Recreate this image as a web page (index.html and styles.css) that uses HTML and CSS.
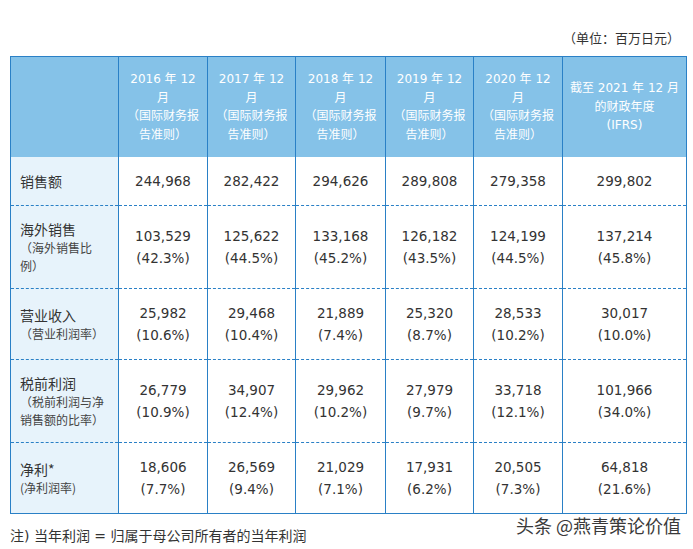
FILE: index.html
```html
<!DOCTYPE html>
<html lang="zh-CN">
<head>
<meta charset="utf-8">
<title>财务数据</title>
<link rel="stylesheet" href="styles.css">
</head>
<body>
<div class="page">
  <div class="unit">（单位：百万日元）</div>
  <table class="fin">
    <colgroup>
      <col class="c-label">
      <col class="c-89">
      <col class="c-88">
      <col class="c-90">
      <col class="c-88">
      <col class="c-89">
      <col class="c-last">
    </colgroup>
    <thead>
      <tr>
        <th class="corner"></th>
        <th>2016 年 12 月<br>（国际财务报告准则）</th>
        <th>2017 年 12 月<br>（国际财务报告准则）</th>
        <th>2018 年 12 月<br>（国际财务报告准则）</th>
        <th>2019 年 12 月<br>（国际财务报告准则）</th>
        <th>2020 年 12 月<br>（国际财务报告准则）</th>
        <th>截至 2021 年 12 月的财政年度<br>(IFRS)</th>
      </tr>
    </thead>
    <tbody>
      <tr>
        <td class="label"><span class="main">销售额</span></td>
        <td>244,968</td>
        <td>282,422</td>
        <td>294,626</td>
        <td>289,808</td>
        <td>279,358</td>
        <td>299,802</td>
      </tr>
      <tr>
        <td class="label"><span class="main">海外销售</span><span class="sub">（海外销售比例）</span></td>
        <td>103,529<br>(42.3%)</td>
        <td>125,622<br>(44.5%)</td>
        <td>133,168<br>(45.2%)</td>
        <td>126,182<br>(43.5%)</td>
        <td>124,199<br>(44.5%)</td>
        <td>137,214<br>(45.8%)</td>
      </tr>
      <tr>
        <td class="label"><span class="main">营业收入</span><span class="sub">（营业利润率）</span></td>
        <td>25,982<br>(10.6%)</td>
        <td>29,468<br>(10.4%)</td>
        <td>21,889<br>(7.4%)</td>
        <td>25,320<br>(8.7%)</td>
        <td>28,533<br>(10.2%)</td>
        <td>30,017<br>(10.0%)</td>
      </tr>
      <tr>
        <td class="label"><span class="main">税前利润</span><span class="sub">（税前利润与净销售额的比率）</span></td>
        <td>26,779<br>(10.9%)</td>
        <td>34,907<br>(12.4%)</td>
        <td>29,962<br>(10.2%)</td>
        <td>27,979<br>(9.7%)</td>
        <td>33,718<br>(12.1%)</td>
        <td>101,966<br>(34.0%)</td>
      </tr>
      <tr>
        <td class="label"><span class="main">净利*</span><span class="sub">(净利润率)</span></td>
        <td>18,606<br>(7.7%)</td>
        <td>26,569<br>(9.4%)</td>
        <td>21,029<br>(7.1%)</td>
        <td>17,931<br>(6.2%)</td>
        <td>20,505<br>(7.3%)</td>
        <td>64,818<br>(21.6%)</td>
      </tr>
    </tbody>
  </table>
  <p class="note">注) 当年利润 = 归属于母公司所有者的当年利润</p>
  <div class="watermark">头条 @燕青策论价值</div>
</div>
</body>
</html>
```

FILE: styles.css
```css
html, body {
  margin: 0;
  padding: 0;
  background: #ffffff;
}

body {
  font-family: "DejaVu Sans", "Noto Sans CJK SC", sans-serif;
  color: #333333;
}

.page {
  position: relative;
  width: 676px;
  padding: 29px 0 0 10px;
}

.unit {
  font-family: "Noto Sans CJK SC", sans-serif;
  font-size: 13px;
  line-height: 18px;
  text-align: right;
  color: #333333;
  margin-bottom: 9px;
  padding-right: 6px;
}

.fin {
  width: 676px;
  border-collapse: collapse;
  table-layout: fixed;
  border: 1px solid #2a80c6;
}

.c-label { width: 108px; }
.c-89 { width: 89px; }
.c-88 { width: 88px; }
.c-90 { width: 90px; }
.c-last { width: 124px; }

.fin th {
  background: #85c2e8;
  color: #ffffff;
  font-weight: normal;
  font-size: 12px;
  line-height: 18.5px;
  padding: 13px 5px 13px 5px;
  border-left: 1px solid #2a80c6;
  border-right: 1px solid #2a80c6;
  text-align: center;
  vertical-align: middle;
}

.fin td {
  font-size: 13.5px;
  line-height: 22px;
  padding: 13px 4px;
  text-align: center;
  vertical-align: middle;
  border-left: 1px solid #2a80c6;
  border-right: 1px solid #2a80c6;
  border-top: 1px dashed #2a80c6;
  color: #333333;
}

.fin tbody tr:first-child td {
  border-top: none;
}

.fin td.label {
  background: #e7f3fb;
  text-align: left;
  padding: 13px 8px 13px 9px;
  font-family: "Noto Sans CJK SC", sans-serif;
}

.label .main {
  display: block;
  font-size: 14px;
  line-height: 20px;
}

.label .sub {
  display: block;
  font-size: 12px;
  line-height: 18px;
  color: #444444;
}

.note {
  margin: 12px 0 0 0;
  font-family: "DejaVu Sans", "Noto Sans CJK SC", sans-serif;
  font-size: 14px;
  line-height: 20px;
  color: #333333;
}

.watermark {
  position: absolute;
  left: 516px;
  top: 513px;
  font-family: "Noto Sans CJK SC", sans-serif;
  font-size: 18px;
  line-height: 24px;
  color: #3a3a3a;
  text-shadow: 0 0 2px #ffffff, 0 0 2px #ffffff;
  white-space: nowrap;
}
```
